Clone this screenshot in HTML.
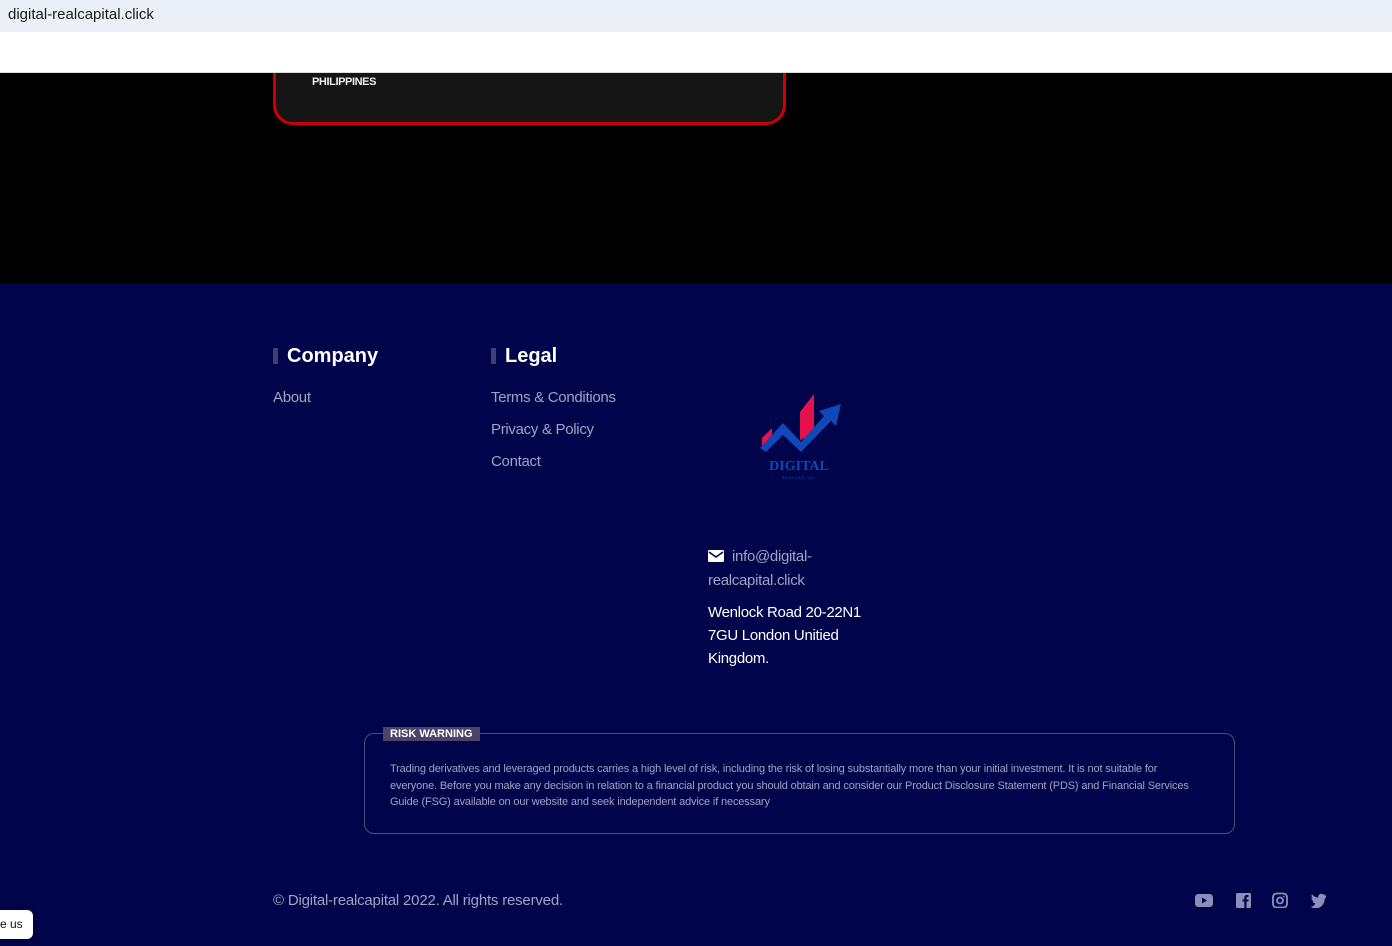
<!DOCTYPE html>
<html><head><meta charset="utf-8"><style>
*{margin:0;padding:0;box-sizing:border-box}
body{width:1392px;height:946px;overflow:hidden;background:#00044a;font-family:"Liberation Sans",sans-serif;position:relative}
.abs{position:absolute}
.lnk{color:#9fa3c4;font-size:15px;letter-spacing:-0.3px}
h3{position:absolute;color:#fff;font-size:20px;font-weight:bold;letter-spacing:0px}
h3:before{content:"";position:absolute;left:-14px;top:3px;width:5px;height:16px;background:#3d4070}
</style></head><body>
<div class="abs" style="left:0;top:73px;width:1392px;height:210px;background:#000"></div>
<div class="abs" style="left:273px;top:60px;width:513px;height:65px;background:#151515;border:3px solid #c00;border-top:none;border-radius:0 0 20px 20px"></div>
<div class="abs" style="left:312px;top:76px;font-size:11px;color:#eee;font-weight:bold;letter-spacing:-0.4px">PHILIPPINES</div>
<div class="abs" style="left:0;top:0;width:1392px;height:32px;background:#eaeff8"></div>
<div class="abs" style="left:8px;top:6px;font-size:15px;color:#1a1a1a">digital-realcapital.click</div>
<div class="abs" style="left:0;top:32px;width:1392px;height:41px;background:#fff;border-bottom:1px solid #ddd"></div>

<h3 style="left:287px;top:345px">Company</h3>
<h3 style="left:505px;top:345px">Legal</h3>
<div class="abs lnk" style="left:273px;top:389px">About</div>
<div class="abs lnk" style="left:491px;top:389px">Terms &amp; Conditions</div>
<div class="abs lnk" style="left:491px;top:421px">Privacy &amp; Policy</div>
<div class="abs lnk" style="left:491px;top:453px">Contact</div>

<svg class="abs" style="left:758px;top:390px" width="86" height="92" viewBox="0 0 86 92">
<polygon points="4,48 14,38 14,52 4,58" fill="#e4124a"/>
<polygon points="42,22 56,4 56,44 42,50" fill="#e4124a"/>
<polygon points="2,58 25,33 43,52 66,26 61,21 83,14 78,36 73,31 43,62 25,45 8,62" fill="#1048b8"/>
<text x="41" y="80" text-anchor="middle" font-family="Liberation Serif,serif" font-weight="bold" font-size="14" fill="#1048b8">DIGITAL</text>
<text x="41" y="89" text-anchor="middle" font-size="3.5" fill="#1048b8" letter-spacing="1">REALCAPITAL</text>
</svg>

<svg class="abs" style="left:708px;top:550px" width="16" height="12" viewBox="0 0 16 12"><rect width="16" height="12" rx="1.5" fill="#fff"/><path d="M1 2l7 5 7-5" stroke="#00044a" stroke-width="1.6" fill="none"/></svg>
<div class="abs" style="left:708px;top:545px;width:170px;font-size:15px;line-height:24px;color:#9fa3c4;text-indent:24px;letter-spacing:-0.3px">info@digital-realcapital.click</div>
<div class="abs" style="left:708px;top:601px;width:170px;font-size:15px;line-height:23px;color:#fff;letter-spacing:-0.3px">Wenlock Road 20-22N1 7GU London Unitied Kingdom.</div>

<div class="abs" style="left:364px;top:733px;width:871px;height:101px;border:1px solid #4a4e86;border-radius:10px"></div>
<div class="abs" style="left:383px;top:727px;background:#4c4468;color:#fff;font-size:11px;font-weight:bold;padding:1px 7px">RISK WARNING</div>
<div class="abs" style="left:390px;top:761px;width:815px;font-size:11px;line-height:16.5px;color:#9fa3c4;letter-spacing:-0.15px">Trading derivatives and leveraged products carries a high level of risk, including the risk of losing substantially more than your initial investment. It is not suitable for everyone. Before you make any decision in relation to a financial product you should obtain and consider our Product Disclosure Statement (PDS) and Financial Services Guide (FSG) available on our website and seek independent advice if necessary</div>

<div class="abs" style="left:273px;top:892px;font-size:15px;color:#9fa3c4;letter-spacing:-0.2px">© Digital-realcapital 2022. All rights reserved.</div>
<svg class="abs" style="left:1195px;top:892px" width="135" height="16" viewBox="0 0 135 16" fill="#8c90b8">
<rect x="0" y="2" width="18" height="13" rx="3.5"/><polygon points="7,5.5 7,11.5 12,8.5" fill="#00044a"/>
<rect x="41" y="1" width="15" height="15" rx="1.5"/><path d="M51.5 16V9.5h2V7.5h-2V6c0-.7.3-1 1-1h1V3h-1.7C49.8 3 49.3 4.3 49.3 5.7V7.5H47.5v2h1.8V16z" fill="#00044a"/>
<rect x="78" y="1.5" width="14" height="14" rx="3.5" fill="none" stroke="#8c90b8" stroke-width="1.8"/><circle cx="85" cy="8.5" r="3" fill="none" stroke="#8c90b8" stroke-width="1.8"/><circle cx="89" cy="4.5" r="0.9"/>
<path d="M131 3.2c-.6.3-1.2.4-1.8.5.7-.4 1.1-1 1.4-1.7-.6.4-1.3.6-2 .8a3.1 3.1 0 0 0-5.3 2.8c-2.6-.1-4.9-1.4-6.4-3.3-.8 1.4-.4 3.2.9 4.1-.5 0-1-.2-1.4-.4 0 1.5 1.1 2.8 2.5 3.1-.5.1-1 .2-1.4.1.4 1.3 1.6 2.1 2.9 2.2A6.3 6.3 0 0 1 115.8 15c1.4.9 3 1.4 4.8 1.4 5.800 0 9-4.8 9-9v-.4c.6-.5 1.1-1 1.400-1.700z"/>
</svg>

<div class="abs" style="left:-10px;top:910px;width:43px;height:29px;background:#fff;border-radius:0 6px 6px 0;box-shadow:0 0 6px rgba(0,0,0,.4);font-size:12px;color:#111;padding:7px 0 0 10px">e us</div>
</body></html>
